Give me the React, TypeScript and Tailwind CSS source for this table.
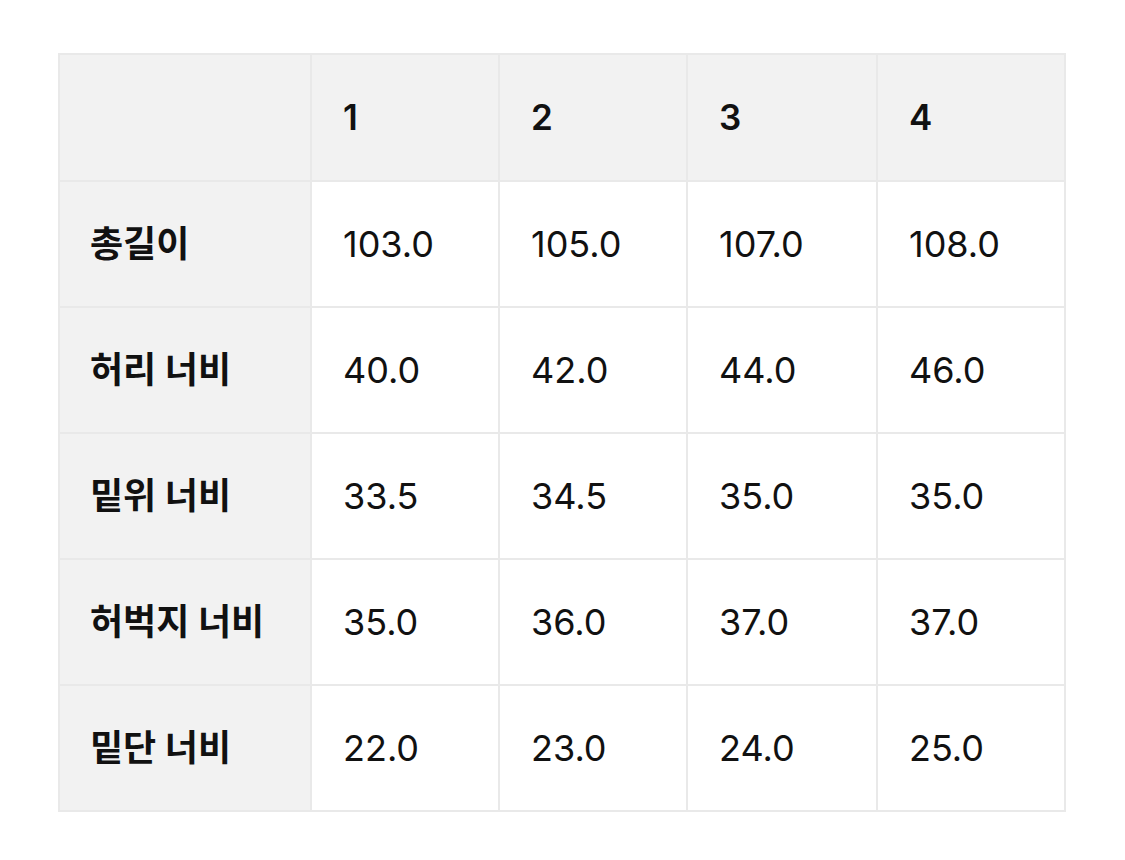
const headers = ["1", "2", "3", "4"];

const rows: Array<{ label: string; values: string[] }> = [
  { label: "총길이", values: ["103.0", "105.0", "107.0", "108.0"] },
  { label: "허리 너비", values: ["40.0", "42.0", "44.0", "46.0"] },
  { label: "밑위 너비", values: ["33.5", "34.5", "35.0", "35.0"] },
  { label: "허벅지 너비", values: ["35.0", "36.0", "37.0", "37.0"] },
  { label: "밑단 너비", values: ["22.0", "23.0", "24.0", "25.0"] },
];

const font = { fontFamily: '"Inter", "Noto Sans CJK KR", sans-serif' };

export default function App() {
  return (
    <div className="w-[1125px] h-[860px] bg-white pt-[53px] pl-[58px]" style={font}>
      <table className="border-collapse text-[#111]">
        <colgroup>
          <col className="w-[252px]" />
          <col className="w-[188px]" />
          <col className="w-[188px]" />
          <col className="w-[190px]" />
          <col className="w-[188px]" />
        </colgroup>
        <thead>
          <tr className="h-[127px] bg-[#f2f2f2]">
            <th className="border-2 border-[#e9e9e9]" />
            {headers.map((h) => (
              <th key={h} className="border-2 border-[#e9e9e9] pl-[31px] text-left text-[35px] font-semibold">
                {h}
              </th>
            ))}
          </tr>
        </thead>
        <tbody>
          {rows.map((row) => (
            <tr key={row.label} className="h-[126px]">
              <td className="border-2 border-[#e9e9e9] bg-[#f2f2f2] pl-[30px] text-[36px] font-bold">
                {row.label}
              </td>
              {row.values.map((v, i) => (
                <td key={i} className="border-2 border-[#e9e9e9] pl-[31px] text-[36px] font-normal">
                  {v}
                </td>
              ))}
            </tr>
          ))}
        </tbody>
      </table>
    </div>
  );
}
